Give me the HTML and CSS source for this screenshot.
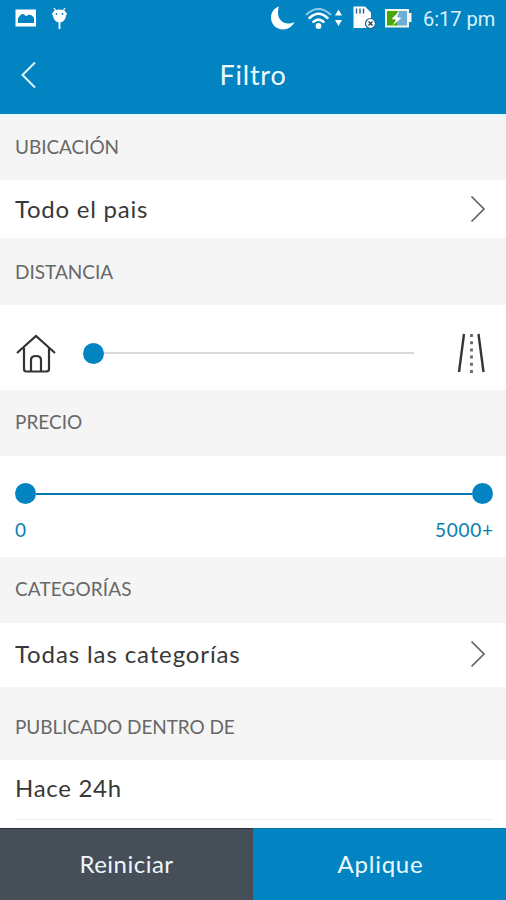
FILE: index.html
```html
<!DOCTYPE html>
<html lang="es">
<head>
<meta charset="utf-8">
<title>Filtro</title>
<link rel="stylesheet" href="styles.css">
</head>
<body>
<div class="app">
  <header class="top">
    <div class="status">
      <svg class="status-left" width="80" height="36" viewBox="0 0 80 36">
        <path fill="#fff" fill-rule="evenodd" d="M15.500 9.500h20.500v17h-20.500zM18 23h16v-5c-1-2-3-3.500-5-3.200-1.500.2-2 1.200-3 1.200s-1.500-2.200-3.500-2-3 2-4.500 4.500z"/>
        <path d="M54 8l2 3M65 8l-2 3" stroke="#fff" stroke-width="1.300"/>
        <path fill="#fff" d="M53 12.500q1-3 6.500-3t6.500 3l1.300 1.500-1.300 1.500c-.3 4-3 7-6.500 7s-6.200-3-6.500-7l-1.300-1.500z"/>
        <path d="M59.500 22v7" stroke="#fff" stroke-width="1.800"/>
        <g fill="#0284c2"><circle cx="56.500" cy="14" r=".9"/><circle cx="62.500" cy="14" r=".9"/></g>
      </svg>
      <svg class="status-right" width="146" height="36" viewBox="268 0 146 36">
        <path fill="#fff" d="M279 6.500C274 8 271 12.500 271 17.500c0 7 5.500 12 12 12 5 0 9.500-3 11.500-7.500-2 1-4 1.500-6 1.500-6 0-10.500-4.500-10.500-10.500 0-2.500.3-4.500 1-6.500z"/>
        <g fill="none" stroke="#fff" stroke-linecap="round">
          <path d="M306.500 14.500q12-11 24 0" stroke="#8fcde8" stroke-width="1.700"/>
          <path d="M309.500 18q9-8.500 18 0" stroke-width="2.500"/>
          <path d="M313.500 21.800q5-4.400 10 0" stroke-width="2.500"/>
        </g>
        <circle cx="318.500" cy="26" r="2.900" fill="#fff"/>
        <path fill="#fff" d="M335 15.500l3.500-6 3.500 6zM335 20h7l-3.500 6z"/>
        <path fill="#fff" d="M353.500 6.500h11.500l6 6v15.500h-17.500z"/>
        <path d="M356.500 8.500v5M360 8.500v5M363.500 8.500v5" stroke="#23658a" stroke-width="1.400"/>
        <circle cx="370.500" cy="23.500" r="5" fill="#fff" stroke="#17699a" stroke-width="1.200"/>
        <path d="M368.500 21.500l4 4m0-4l-4 4" stroke="#204050" stroke-width="1.300"/>
        <path fill="#f2f7e9" d="M385 9h24v4h2.500v9h-2.500v5.500h-24z"/>
        <path fill="#48a50a" d="M387 11h11v14.500h-11z"/>
        <path fill="#6caed8" d="M397 11h10v14.500h-10z"/>
        <path fill="#fff" d="M399.500 11l-8 8 4.500.7-3.500 5.800 9-7.500-4.500-1z"/>
      </svg>
      <span class="clock">6:17 pm</span>
    </div>
    <div class="title-bar">
      <svg class="back" width="17" height="28" viewBox="0 0 17 28"><path d="M15 1.500L2.500 14 15 26.500" fill="none" stroke="#e4f6fb" stroke-width="2"/></svg>
      <h1>Filtro</h1>
    </div>
  </header>

  <h2 class="head h-location">UBICACIÓN</h2>
  <div class="row r-location"><span>Todo el pais</span>
    <svg class="chevron" width="16" height="28" viewBox="0 0 16 28"><path d="M1.500 1.500L14 14 1.500 26.500" fill="none" stroke="#636363" stroke-width="1.700"/></svg>
  </div>

  <h2 class="head h-distance">DISTANCIA</h2>
  <div class="row r-distance">
    <svg class="house" width="40" height="42" viewBox="0 0 40 42"><g fill="none" stroke="#333" stroke-width="2.200"><path d="M1 21L20 4l19 17"/><path d="M8 16v21q0 2.500 2.500 2.500h20q2.500 0 2.500-2.500V16"/><path d="M15 39V28q0-4 5-4t5 4v11"/></g></svg>
    <div class="slider"><i class="knob"></i><i class="track"></i></div>
    <svg class="road" width="28" height="40" viewBox="0 0 28 40"><path d="M7 1L2 39M21.500 1l5 38" stroke="#343434" stroke-width="2.400"/><path d="M14.500 1v39" stroke="#666" stroke-width="2.800" stroke-dasharray="3 4.200"/></svg>
  </div>

  <h2 class="head h-price">PRECIO</h2>
  <div class="r-price">
    <div class="range"><i class="knob"></i><i class="track"></i><i class="knob"></i></div>
    <div class="limits"><span>0</span><span class="max">5000+</span></div>
  </div>

  <h2 class="head h-category">CATEGORÍAS</h2>
  <div class="row r-category"><span>Todas las categorías</span>
    <svg class="chevron" width="16" height="28" viewBox="0 0 16 28"><path d="M1.500 1.500L14 14 1.500 26.500" fill="none" stroke="#636363" stroke-width="1.700"/></svg>
  </div>

  <h2 class="head h-published">PUBLICADO DENTRO DE</h2>
  <div class="r-published"><div class="option">Hace 24h</div></div>

  <footer class="actions">
    <button class="reset">Reiniciar</button>
    <button class="apply">Aplique</button>
  </footer>
</div>
</body>
</html>
```
FILE: styles.css
```css
* { box-sizing: border-box; }
body { margin: 0; background: #fff; font-family: Lato, "Liberation Sans", sans-serif; }
.app { width: 506px; height: 900px; display: flex; flex-direction: column; overflow: hidden; }
.app > * { flex: none; }
svg { display: block; flex: none; }
span { white-space: nowrap; }

.top { height: 114px; background: #0284c2; color: #eefaff; }
.status { height: 36px; display: flex; align-items: center; }
.status-right { margin-left: auto; }
.clock { width: 83px; margin-left: 9px; padding-top: 2px; font: 20px/24px Roboto, sans-serif; color: #d9f1fb; }
.title-bar { height: 78px; display: grid; grid-template-columns: 60px 1fr 60px; align-items: center; }
.back { margin-left: 20px; }
h1 { margin: 0; text-align: center; font-size: 27px; line-height: 32px; font-weight: 400; letter-spacing: .8px; }

.head { margin: 0; padding: 0 15px; display: flex; align-items: center; background: #f5f5f5; color: #686868; font-size: 19px; font-weight: 400; line-height: 24px; }
.h-location { height: 66px; padding-bottom: 2px; border-top: 2px solid #e2fbff; letter-spacing: -.05px; }
.h-distance { height: 67px; }
.h-price { height: 66px; padding-bottom: 2px; }
.h-category { height: 66px; padding-bottom: 2px; letter-spacing: .1px; }
.h-published { height: 73px; padding-top: 7px; letter-spacing: -.08px; }

.row { display: flex; align-items: center; justify-content: space-between; padding: 0 20px 0 15px; font-size: 24px; line-height: 28px; letter-spacing: .75px; color: #383838; }
.r-location { height: 58px; }
.r-distance { height: 85px; padding: 11px 21px 0 16px; }
.r-category { height: 64px; padding-bottom: 2px; letter-spacing: .88px; }

.knob { width: 21px; height: 21px; border-radius: 50%; background: #0284c2; flex: none; }
.slider { display: flex; align-items: center; width: 331px; margin: 0 17px 0 0; }
.slider .track { flex: 1; height: 2px; background: #d6dada; }

.r-price { height: 101px; padding: 27px 13px 0 15px; }
.range { display: flex; align-items: center; width: 478px; }
.range .track { flex: 1; height: 2px; background: #0878b0; }
.limits { display: flex; justify-content: space-between; margin-top: 14px; font-size: 19px; line-height: 24px; color: #087fac; }
.max { letter-spacing: .7px; margin-right: -.7px; }

.r-published { height: 68px; padding: 0 13px 0 15px; }
.option { height: 60px; border-bottom: 1px solid #f0f0f0; font-size: 24px; line-height: 56px; letter-spacing: .7px; color: #383838; }

.actions { height: 72px; display: flex; }
button { border: 0; padding: 0 0 2px; font: 24px/28px Lato, "Liberation Sans", sans-serif; letter-spacing: .5px; color: #edf8fd; border-top: 1px solid #25333f; }
.reset { width: 253px; background: #464e58; }
.apply { width: 253px; padding-left: 2px; background: #0284c2; border-top-color: #0874a8; letter-spacing: .75px; }
```
